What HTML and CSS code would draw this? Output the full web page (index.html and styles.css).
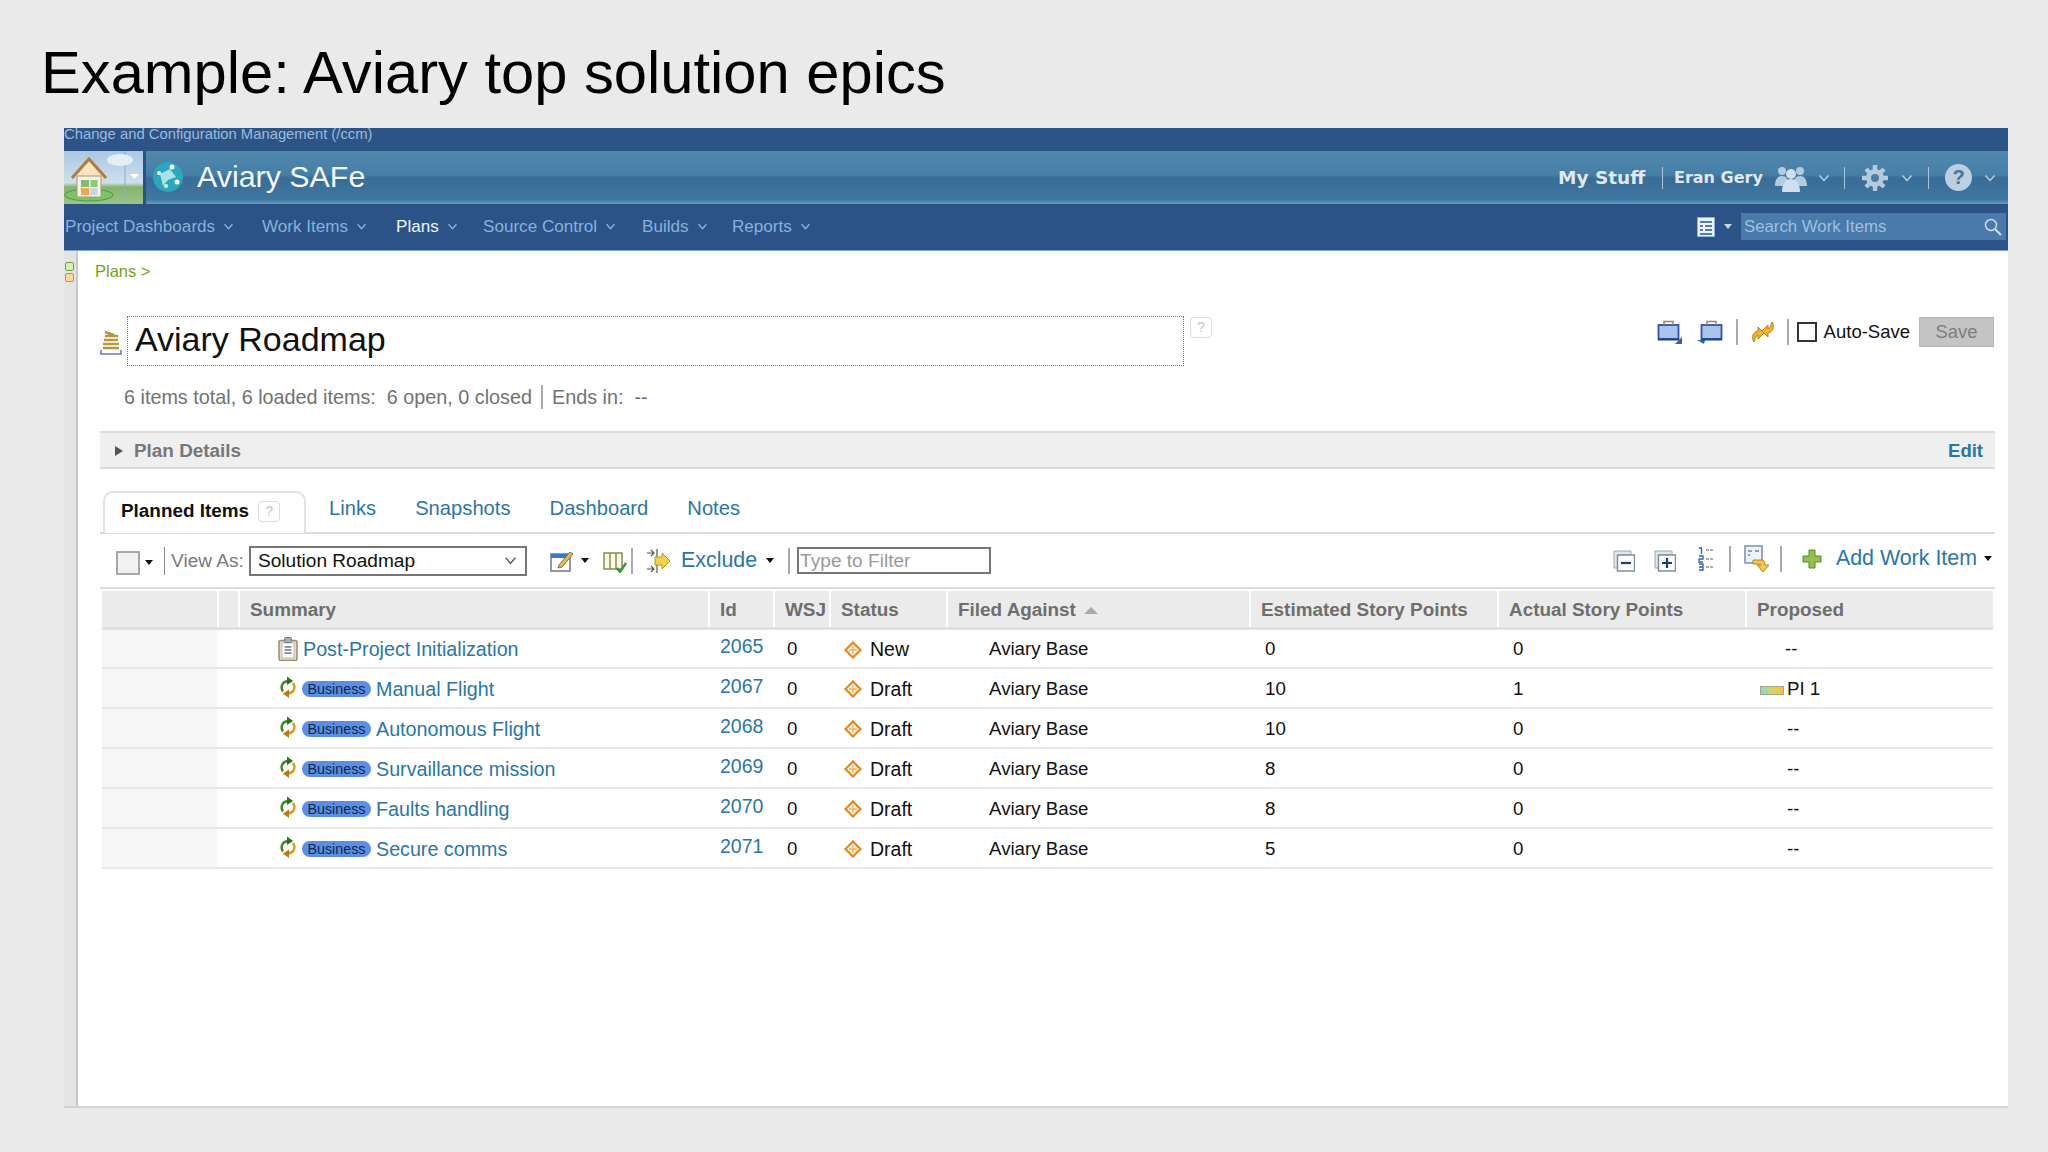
FILE: index.html
```html
<!DOCTYPE html>
<html lang="en">
<head>
<meta charset="utf-8">
<title>Example: Aviary top solution epics</title>
<link rel="stylesheet" href="styles.css">
</head>
<body>
<svg class="defs" width="0" height="0" aria-hidden="true">
  <defs>
    <symbol id="i-chev" viewBox="0 0 12 8"><path d="M1.5 1.5 6 6.5l4.500-5" fill="none" stroke="currentColor" stroke-width="1.500"/></symbol>
    <symbol id="i-caret" viewBox="0 0 8 5"><path d="M0 0h8L4 5z" fill="currentColor"/></symbol>
    <symbol id="i-clip" viewBox="0 0 20 24"><rect x="1" y="3.500" width="18" height="20" rx="2" fill="#e8dcc4" stroke="#a08a68" stroke-width="1.500"/><rect x="4" y="6" width="12" height="15" fill="#fff" stroke="#b8b8c0"/><rect x="6.500" y="0.500" width="7" height="5" rx="1" fill="#a6a8b4" stroke="#7c7e8a"/><path d="M6.500 10h7M6.500 13h7M6.500 16h7" stroke="#6a7a9a" stroke-width="1.300"/></symbol>
    <symbol id="i-cycle" viewBox="0 0 18 22"><path d="M4 15.500C1 11 3 5.500 9 5" fill="none" stroke="#3d8a22" stroke-width="2.400"/><path d="M8 0.500 14 5l-6 4z" fill="#2f6f16"/><path d="M14 7c3 4.500 1 10-5 10.500" fill="none" stroke="#d99a1c" stroke-width="2.400"/><path d="M10 22 4 17.500l6-4z" fill="#b87a10"/></symbol>
    <symbol id="i-state" viewBox="0 0 18 18"><path d="M9 1.500 16.500 9 9 16.500 1.500 9z" fill="#fff6e4" stroke="#e8861c" stroke-width="2.200"/><path d="M9 5v8M5 9h8" stroke="#f4b060" stroke-width="1.500"/></symbol>
    <symbol id="i-case-a" viewBox="0 0 26 24"><rect x="1.500" y="5" width="20" height="14" fill="#a9c4ee" stroke="#2e55a0" stroke-width="1.800"/><path d="M7 5V1.500h9V5" fill="none" stroke="#a08070" stroke-width="1.500"/><path d="M1 19.500h21" stroke="#1d3f88" stroke-width="2"/><path d="M25 17v7h-7z" fill="#2c62a8"/></symbol>
    <symbol id="i-case-b" viewBox="0 0 26 24"><rect x="4.500" y="5" width="20" height="14" fill="#a9c4ee" stroke="#2e55a0" stroke-width="1.800"/><path d="M10 5V1.500h9V5" fill="none" stroke="#a08070" stroke-width="1.500"/><path d="M4 19.500h21" stroke="#1d3f88" stroke-width="2"/><path d="M0 20h8l-1 4z" fill="#2c62a8"/></symbol>
  </defs>
</svg>
<main class="slide">
  <h1 class="slide-title">Example: Aviary top solution epics</h1>
  <section class="shot">
    <div class="app-strip">Change and Configuration Management (/ccm)</div>
    <header class="banner">
      <div class="home-tile">
        <svg class="home-svg" viewBox="0 0 79 53" aria-hidden="true">
          <path d="M61 0v53" stroke="#8fb0c8" stroke-width="1"/>
          <ellipse cx="56" cy="9" rx="13" ry="6" fill="#e4eef5"/>
          <ellipse cx="25" cy="44" rx="24" ry="6" fill="#7cc46a" stroke="#4d9a3e"/>
          <path d="M8 27 25 8l17 19" fill="#f8e4c0" stroke="#b07a3c" stroke-width="3"/>
          <rect x="13" y="25" width="24" height="21" fill="#f6f2e6" stroke="#a89878"/>
          <rect x="17" y="29" width="8" height="7" fill="#7cc070"/><rect x="26.500" y="29" width="7" height="7" fill="#8acb78"/>
          <rect x="17" y="37" width="8" height="7" fill="#f0a850"/><rect x="26.500" y="37" width="7" height="7" fill="#c8d4e0"/>
          <path d="M66 23h9l-4.500 5z" fill="#fff"/>
        </svg>
      </div>
      <div class="banner-bar">
        <svg class="globe" viewBox="0 0 32 32" aria-hidden="true">
          <circle cx="16" cy="16" r="15" fill="#2aa7bd"/>
          <path d="M8 13 18 8l6 8-8 3-5 6z" fill="#a6e2e4"/>
          <circle cx="20" cy="6" r="2.500" fill="#fff"/><circle cx="25" cy="21" r="2.500" fill="#fff"/><circle cx="14" cy="25" r="2" fill="#e6fbfb"/><circle cx="7" cy="12" r="2" fill="#e6fbfb"/>
        </svg>
        <span class="project-name">Aviary SAFe</span>
        <div class="banner-right">
          <span class="my-stuff">My Stuff</span>
          <span class="bsep bsep-a"></span>
          <span class="user-name">Eran Gery</span>
          <svg class="people" viewBox="0 0 32 28" aria-hidden="true">
            <g fill="#b4cbdd"><circle cx="7" cy="7" r="4"/><circle cx="25" cy="7" r="4"/><path d="M0 22c0-7 3-10 7-10s7 3 7 10zM18 22c0-7 3-10 7-10s7 3 7 10z"/></g>
            <circle cx="16" cy="10" r="5" fill="#cfdfec"/><path d="M7 28c0-9 4-13 9-13s9 4 9 13z" fill="#cfdfec"/>
          </svg>
          <svg class="bchev bchev-a"><use href="#i-chev"/></svg>
          <span class="bsep bsep-b"></span>
          <svg class="gear" viewBox="0 0 28 28" aria-hidden="true">
            <path d="M14 8a6 6 0 1 0 0 12 6 6 0 0 0 0-12z" fill="none" stroke="#b4cbdd" stroke-width="6"/>
            <path d="M14 1v26M1 14h26M5 5l18 18M23 5 5 23" stroke="#b4cbdd" stroke-width="4.500"/>
            <circle cx="14" cy="14" r="4" fill="#4a7fa6"/>
          </svg>
          <svg class="bchev bchev-b"><use href="#i-chev"/></svg>
          <span class="bsep bsep-c"></span>
          <span class="help-dot">?</span>
          <svg class="bchev bchev-c"><use href="#i-chev"/></svg>
        </div>
      </div>
    </header>
    <nav class="menu">
      <a class="menu-item w-dash">Project Dashboards<svg class="mchev"><use href="#i-chev"/></svg></a>
      <a class="menu-item w-work">Work Items<svg class="mchev"><use href="#i-chev"/></svg></a>
      <a class="menu-item menu-active w-plans">Plans<svg class="mchev"><use href="#i-chev"/></svg></a>
      <a class="menu-item w-src">Source Control<svg class="mchev"><use href="#i-chev"/></svg></a>
      <a class="menu-item w-build">Builds<svg class="mchev"><use href="#i-chev"/></svg></a>
      <a class="menu-item w-rep">Reports<svg class="mchev"><use href="#i-chev"/></svg></a>
      <div class="menu-right">
        <svg class="doc-ico" viewBox="0 0 18 20" aria-hidden="true"><rect width="18" height="20" fill="#eaf4ff" stroke="#6aa0e0" stroke-width="1.500"/><path d="M3 5h12M3 9h3M8 9h7M3 13h3M8 13h7M3 17h12" stroke="#2c5388" stroke-width="1.600"/></svg>
        <svg class="doc-caret"><use href="#i-caret"/></svg>
        <div class="search">
          <span>Search Work Items</span>
          <svg class="search-ico" viewBox="0 0 18 18" aria-hidden="true"><circle cx="7" cy="7" r="5.500" fill="none" stroke="#c8dcee" stroke-width="1.500"/><path d="m11 11 6 6" stroke="#c8dcee" stroke-width="2.200"/></svg>
        </div>
      </div>
    </nav>
    <div class="body">
      <aside class="side">
        <span class="side-dot side-green"></span>
        <span class="side-dot side-orange"></span>
      </aside>
      <div class="content">
        <div class="crumb">Plans &gt;</div>
        <div class="title-row">
          <svg class="plan-ico" viewBox="0 0 22 26" aria-hidden="true">
            <path d="M5 2 14 5M5 6h13M4 10h14M3 14h16M3 18h16" stroke="#b8963c" stroke-width="2.400" fill="none"/>
            <path d="M1 20v4h20v-4" stroke="#6678b8" stroke-width="1.500" fill="none"/>
          </svg>
          <div class="title-box">Aviary Roadmap</div>
          <span class="bubble bubble-title">?</span>
          <div class="title-actions">
            <svg class="act-ico"><use href="#i-case-a"/></svg>
            <svg class="act-ico act-2"><use href="#i-case-b"/></svg>
            <span class="vsep act-sep1"></span>
            <svg class="sync" viewBox="0 0 24 24" aria-hidden="true"><path d="M3 22c-3-5-1-10 4-11V7l6 6-6 6v-4c-2 1-3 3-4 7zM21 2c3 5 1 10-4 11v4l-6-6 6-6v4c2-1 3-3 4-7z" fill="#f0b428" stroke="#b8801a"/></svg>
            <span class="vsep act-sep2"></span>
            <span class="check"></span>
            <span class="autosave">Auto-Save</span>
            <span class="save-btn">Save</span>
          </div>
        </div>
        <div class="stats"><span>6 items total, 6 loaded items:&nbsp; 6 open, 0 closed</span><span class="stats-sep"></span><span>Ends in: &nbsp;--</span></div>
        <div class="details">
          <span class="tri"></span>
          <span class="details-label">Plan Details</span>
          <a class="details-edit">Edit</a>
        </div>
        <div class="tabs">
          <div class="tab-active">Planned Items<span class="bubble bubble-tab">?</span></div>
          <a class="tab tab-links">Links</a>
          <a class="tab">Snapshots</a>
          <a class="tab">Dashboard</a>
          <a class="tab">Notes</a>
        </div>
        <div class="toolbar">
          <span class="pick"></span>
          <svg class="caret caret-pick"><use href="#i-caret"/></svg>
          <span class="vsep sep-view"></span>
          <span class="view-as">View As:</span>
          <div class="select"><span>Solution Roadmap</span><svg class="sel-chev"><use href="#i-chev"/></svg></div>
          <svg class="tool-edit" viewBox="0 0 24 22" aria-hidden="true"><rect x="1" y="4" width="19" height="17" fill="#fff" stroke="#6a7a8a" stroke-width="1.500"/><path d="M1 4h19v4H1z" fill="#3a78c4"/><path d="m9 15 11-13 3 2-11 13-4 1z" fill="#e8b860" stroke="#8a6a30"/></svg>
          <svg class="caret caret-edit"><use href="#i-caret"/></svg>
          <svg class="tool-cols" viewBox="0 0 24 24" aria-hidden="true"><path d="M1 4h18v16H1zM7 4v16M13 4v16" fill="#fdf8e6" stroke="#8a8a50" stroke-width="1.500"/><path d="m14 19 3 4 6-9" fill="none" stroke="#2f9a3a" stroke-width="2.400"/></svg>
          <span class="vsep sep-cols"></span>
          <svg class="tool-excl" viewBox="0 0 24 26" aria-hidden="true"><path d="M1 5h7M5 2l3 3-3 3M1 21h7M5 18l3 3-3 3M11 1v24" stroke="#555" stroke-width="1.200" fill="none"/><path d="M9 9h7V5l8 8-8 8v-4H9z" fill="#f2d24a" stroke="#b8961e"/></svg>
          <a class="tool-link">Exclude</a>
          <svg class="caret caret-excl"><use href="#i-caret"/></svg>
          <span class="vsep sep-excl"></span>
          <div class="filter">Type to Filter</div>
          <div class="tool-right">
            <svg class="tool-sq" viewBox="0 0 22 22" aria-hidden="true"><path d="M1 1h17v4H5v13H1z" fill="#dfe6ee" stroke="#9aa8b8"/><rect x="4.500" y="5" width="17" height="16" fill="#fff" stroke="#7c8fa3" stroke-width="1.500"/><path d="M8 13h10" stroke="#123f6e" stroke-width="2.200"/></svg>
            <svg class="tool-sq sq-2" viewBox="0 0 22 22" aria-hidden="true"><path d="M1 1h17v4H5v13H1z" fill="#dfe6ee" stroke="#9aa8b8"/><rect x="4.500" y="5" width="17" height="16" fill="#fff" stroke="#7c8fa3" stroke-width="1.500"/><path d="M8 13h10M13 8v10" stroke="#123f6e" stroke-width="2.200"/></svg>
            <svg class="tool-num" viewBox="0 0 16 24" aria-hidden="true"><path d="M1 1h2.500v6M1 9h4v3H1v3h4M1 17h4v6H1M1 20h4" fill="none" stroke="#2c62a8" stroke-width="1.300"/><path d="M8 3h7M8 12h7M8 20h7" stroke="#8a96a4" stroke-width="1.600" stroke-dasharray="3 1"/></svg>
            <span class="vsep sep-num"></span>
            <svg class="tool-move" viewBox="0 0 26 28" aria-hidden="true"><rect x="1" y="1" width="17" height="17" fill="#eef3fb" stroke="#6f86a8" stroke-width="1.400"/><path d="M4 6h4M11 6h4M4 10h2" stroke="#6f86a8" stroke-width="1.300"/><path d="M9 15h8c3 0 4 2 4 5h4l-6 7-6-7h4c0-1-1-1-3-1H9z" fill="#f4c84c" stroke="#b8861e"/></svg>
            <span class="vsep sep-move"></span>
            <svg class="tool-plus" viewBox="0 0 20 20" aria-hidden="true"><path d="M7 1h6v6h6v6h-6v6H7v-6H1V7h6z" fill="#92c04a" stroke="#4f8a2a"/></svg>
            <a class="tool-link add-link">Add Work Item</a>
            <svg class="caret caret-add"><use href="#i-caret"/></svg>
          </div>
        </div>
        <table class="grid">
          <colgroup>
            <col class="c-a"><col class="c-b"><col class="c-sum"><col class="c-id"><col class="c-wsj"><col class="c-st"><col class="c-fil"><col class="c-est"><col class="c-act"><col class="c-pro">
          </colgroup>
          <thead>
            <tr>
              <th></th><th></th><th class="th-sum">Summary</th><th>Id</th><th>WSJ</th><th>Status</th>
              <th>Filed Against <span class="sort"></span></th><th>Estimated Story Points</th><th>Actual Story Points</th><th>Proposed</th>
            </tr>
          </thead>
          <tbody>
            <tr>
              <td class="stub"></td><td></td>
              <td class="sum"><svg class="clip"><use href="#i-clip"/></svg><a class="link link-first">Post-Project Initialization</a></td>
              <td class="id">2065</td><td class="wsj">0</td>
              <td class="st"><svg class="state"><use href="#i-state"/></svg>New</td>
              <td class="fil">Aviary Base</td><td class="num">0</td><td class="num">0</td><td class="pro"><span class="dash dash-first">--</span></td>
            </tr>
            <tr>
              <td class="stub"></td><td></td>
              <td class="sum"><svg class="cycle"><use href="#i-cycle"/></svg><span class="badge">Business</span><a class="link">Manual Flight</a></td>
              <td class="id">2067</td><td class="wsj">0</td>
              <td class="st"><svg class="state"><use href="#i-state"/></svg>Draft</td>
              <td class="fil">Aviary Base</td><td class="num">10</td><td class="num">1</td>
              <td class="pro"><span class="gauge"><span class="g1"></span><span class="g2"></span><span class="g3"></span></span>PI 1</td>
            </tr>
            <tr>
              <td class="stub"></td><td></td>
              <td class="sum"><svg class="cycle"><use href="#i-cycle"/></svg><span class="badge">Business</span><a class="link">Autonomous Flight</a></td>
              <td class="id">2068</td><td class="wsj">0</td>
              <td class="st"><svg class="state"><use href="#i-state"/></svg>Draft</td>
              <td class="fil">Aviary Base</td><td class="num">10</td><td class="num">0</td><td class="pro"><span class="dash">--</span></td>
            </tr>
            <tr>
              <td class="stub"></td><td></td>
              <td class="sum"><svg class="cycle"><use href="#i-cycle"/></svg><span class="badge">Business</span><a class="link">Survaillance mission</a></td>
              <td class="id">2069</td><td class="wsj">0</td>
              <td class="st"><svg class="state"><use href="#i-state"/></svg>Draft</td>
              <td class="fil">Aviary Base</td><td class="num">8</td><td class="num">0</td><td class="pro"><span class="dash">--</span></td>
            </tr>
            <tr>
              <td class="stub"></td><td></td>
              <td class="sum"><svg class="cycle"><use href="#i-cycle"/></svg><span class="badge">Business</span><a class="link">Faults handling</a></td>
              <td class="id">2070</td><td class="wsj">0</td>
              <td class="st"><svg class="state"><use href="#i-state"/></svg>Draft</td>
              <td class="fil">Aviary Base</td><td class="num">8</td><td class="num">0</td><td class="pro"><span class="dash">--</span></td>
            </tr>
            <tr>
              <td class="stub"></td><td></td>
              <td class="sum"><svg class="cycle"><use href="#i-cycle"/></svg><span class="badge">Business</span><a class="link">Secure comms</a></td>
              <td class="id">2071</td><td class="wsj">0</td>
              <td class="st"><svg class="state"><use href="#i-state"/></svg>Draft</td>
              <td class="fil">Aviary Base</td><td class="num">5</td><td class="num">0</td><td class="pro"><span class="dash">--</span></td>
            </tr>
          </tbody>
        </table>
      </div>
    </div>
  </section>
</main>
</body>
</html>
```
FILE: styles.css
```css
* { box-sizing: border-box; }
html, body { margin: 0; padding: 0; }
body { font-family: "Liberation Sans", Arial, sans-serif; color: #111; }
.defs { display: block; height: 0; width: 0; }
a { color: inherit; text-decoration: none; }
svg { display: block; flex: none; }

.slide { width: 2048px; height: 1152px; background: #eaeaea; overflow: hidden; }
.slide-title { margin: 0; height: 128px; padding: 35px 0 0 41px; font-size: 59.700px; line-height: 76px; font-weight: 400; color: #000; }

.shot { margin-left: 64px; width: 1944px; height: 980px; background: #fff; display: flex; flex-direction: column; border-bottom: 2px solid #d2d2d2; }
.app-strip { height: 22px; background: #2d5487; color: #9cbad8; font-size: 14.800px; line-height: 13px; white-space: nowrap; }

.banner { height: 55px; background: #2a5084; display: flex; gap: 3px; padding: 1px 0 1px; }
.home-tile { width: 79px; background: linear-gradient(#a9c8e2 0%, #cfe0ec 60%, #84b36c 68%, #9cc488 100%); }
.home-svg { width: 79px; height: 53px; }
.banner-bar { flex: 1; display: flex; align-items: center; padding-left: 6px; background: linear-gradient(#5089ae 0%, #467ea6 45%, #386c96 52%, #3f78a2 92%, #6d9fc2 100%); color: #fff; }
.globe { width: 32px; height: 32px; margin-bottom: 2px; }
.project-name { margin: 0 0 2px 13px; font-size: 30.400px; color: #f4f8fb; }
.banner-right { margin-left: auto; display: flex; align-items: center; }
.my-stuff { font-family: "DejaVu Sans", sans-serif; font-weight: 700; font-size: 18.500px; width: 86px; color: #dfe9f2; white-space: nowrap; }
.user-name { font-family: "DejaVu Sans", sans-serif; font-weight: 700; font-size: 16px; width: 88px; color: #dfe9f2; white-space: nowrap; }
.bsep { width: 1px; height: 22px; background: #a8c4da; }
.bsep-a { margin: 0 11px 0 18px; }
.bsep-b { margin: 0 16px 0 14px; }
.bsep-c { margin: 0 16px 0 15px; }
.people { width: 32px; height: 28px; margin-left: 13px; }
.gear { width: 28px; height: 28px; }
.bchev { width: 12px; height: 8px; color: #b8d0e2; }
.bchev-a { margin-left: 11px; }
.bchev-b { margin-left: 12px; }
.bchev-c { margin: 0 12px 0 12px; }
.help-dot { width: 27px; height: 27px; border-radius: 50%; background: #bcd0e2; color: #4a7298; font-weight: 700; font-size: 20px; line-height: 27px; text-align: center; }

.menu { height: 46px; background: #2c5388; border-bottom: 1px solid #7fa6d6; display: flex; align-items: center; padding: 0 0 2px 1px; color: #86b2dc; font-size: 17.100px; white-space: nowrap; }
.menu-item { display: flex; align-items: center; gap: 8px; }
.menu-active { color: #eef4fa; }
.w-dash { width: 197px; }
.w-work { width: 134px; }
.w-plans { width: 87px; }
.w-src { width: 159px; }
.w-build { width: 90px; }
.w-rep { width: 90px; }
.mchev { width: 11px; height: 7px; color: #8fb2d4; }
.menu-right { margin-left: auto; display: flex; align-items: center; padding-right: 2px; }
.doc-ico { width: 18px; height: 20px; }
.doc-caret { width: 8px; height: 5px; margin: 0 9px 0 9px; color: #c5d8ea; }
.search { width: 265px; height: 27px; background: #4a79ab; display: flex; align-items: center; justify-content: space-between; padding: 0 4px 0 3px; color: #9ec0de; font-size: 16.800px; }
.search-ico { width: 18px; height: 18px; }

.body { flex: 1; display: flex; min-height: 0; }
.side { width: 14px; background: #e4e4e4; border-right: 2px solid #c8c8c8; padding: 11px 0 0 1px; display: flex; flex-direction: column; gap: 2px; }
.side-dot { width: 9px; height: 9px; border-radius: 2px; border: 1.500px solid; }
.side-green { border-color: #6aa83c; background: #d8ecc4; }
.side-orange { border-color: #e08a2a; background: #fbd8a6; }

.content { flex: 1; min-width: 0; padding-left: 17px; }
.crumb { height: 49px; padding-top: 11px; font-size: 16.500px; line-height: 18px; color: #6fa515; }

.title-row { height: 49px; margin-left: 5px; margin-top: 16px; padding-right: 14px; display: flex; align-items: flex-start; }
.plan-ico { width: 22px; height: 26px; margin-top: 14px; }
.title-box { width: 1057px; height: 50px; margin-left: 5px; padding-left: 7px; border: 1px dotted #777; font-size: 34px; line-height: 44px; color: #111; white-space: nowrap; }
.bubble { display: block; border: 1.500px solid #dcdcdc; border-radius: 4px; color: #c6c6c6; text-align: center; background: #fff; }
.bubble-title { width: 22px; height: 21px; margin: 1px 0 0 6px; font-size: 14px; line-height: 18px; }
.title-actions { margin-left: auto; display: flex; align-items: center; height: 32px; }
.act-ico { width: 26px; height: 24px; }
.act-2 { margin-left: 14px; }
.vsep { display: block; flex: none; width: 2px; height: 26px; background: #aaa; }
.act-sep1 { margin: 0 13px; }
.act-sep2 { margin: 0 8px 0 12px; }
.sync { width: 24px; height: 24px; }
.check { width: 20px; height: 20px; border: 2px solid #333; background: #fff; }
.autosave { margin-left: 7px; font-size: 18.500px; color: #111; }
.save-btn { width: 75px; height: 30px; margin-left: 9px; background: #c4c4c4; border: 1px solid #b8b8b8; color: #7e7e7e; font-size: 18.500px; line-height: 28px; text-align: center; }

.stats { margin: 14px 0 0 29px; height: 36px; display: flex; align-items: center; color: #727272; font-size: 19.800px; white-space: nowrap; }
.stats-sep { width: 2px; height: 24px; background: #aaa; margin: 0 9px 0 9px; }

.details { height: 38px; margin: 16px 0 0 5px; width: 1895px; background: #efefef; border-top: 2px solid #dcdcdc; border-bottom: 2px solid #dcdcdc; display: flex; align-items: center; padding: 2px 12px 0 15px; }
.tri { width: 0; height: 0; border-left: 8px solid #555; border-top: 5px solid transparent; border-bottom: 5px solid transparent; }
.details-label { margin-left: 11px; font-weight: 700; font-size: 18.900px; color: #777; }
.details-edit { margin-left: auto; font-weight: 700; font-size: 18.500px; color: #2a76a8; }

.tabs { height: 65px; margin-left: 5px; width: 1895px; padding: 22px 0 0 3px; border-bottom: 2px solid #dcdcdc; display: flex; align-items: flex-start; gap: 39px; font-size: 20.200px; color: #2a76a8; }
.tab-active { width: 203px; height: 42px; margin-right: -16px; padding: 7px 0 0 16px; border: 2px solid #e2e2e2; border-bottom: 0; border-radius: 10px 10px 0 0; background: #fff; color: #111; font-weight: 700; font-size: 18.900px; display: flex; align-items: flex-start; }
.bubble-tab { width: 22px; height: 21px; margin: 1px 0 0 9px; font-size: 14px; line-height: 18px; font-weight: 400; }
.tab { padding-top: 6px; }

.toolbar { height: 55px; margin-left: 5px; width: 1895px; border-bottom: 2px solid #dcdcdc; display: flex; align-items: center; font-size: 19.100px; }
.pick { width: 24px; height: 24px; margin: 4px 0 0 16px; border: 2px solid #a8a8a8; background: #f1f1f1; }
.caret { width: 8px; height: 5px; color: #111; }
.caret-pick { margin: 4px 0 0 5px; }
.sep-view { margin: 0 6px 0 11px; width: 1px; height: 28px; background: #888; }
.view-as { color: #7b7b7b; width: 78px; white-space: nowrap; }
.select { width: 278px; height: 30px; border: 2px solid #777; display: flex; align-items: center; justify-content: space-between; padding: 0 8px 0 7px; color: #111; white-space: nowrap; }
.sel-chev { width: 13px; height: 9px; color: #666; }
.tool-edit { width: 24px; height: 22px; margin-left: 23px; }
.caret-edit { margin-left: 7px; }
.tool-cols { width: 24px; height: 24px; margin-left: 14px; }
.sep-cols { width: 2px; height: 26px; margin-left: 4px; }
.tool-excl { width: 24px; height: 26px; margin-left: 13px; }
.tool-link { color: #2a76a8; font-size: 21.400px; white-space: nowrap; }
.tool-excl + .tool-link { margin-left: 11px; }
.caret-excl { margin-left: 9px; }
.sep-excl { margin: 0 7px 0 14px; }
.filter { width: 194px; height: 27px; border: 2px solid #777; padding-left: 1px; line-height: 23px; color: #9a9a9a; white-space: nowrap; }
.tool-right { margin-left: auto; display: flex; align-items: center; padding-bottom: 4px; }
.tool-sq { width: 22px; height: 22px; margin-top: 4px; }
.sq-2 { margin-left: 19px; }
.tool-num { width: 16px; height: 24px; margin-left: 22px; }
.sep-num { margin: 0 13px 0 15px; }
.tool-move { width: 26px; height: 28px; }
.sep-move { margin: 0 20px 0 10px; }
.tool-plus { width: 20px; height: 20px; }
.add-link { margin-left: 14px; }
.caret-add { margin: 0 3px 0 7px; }

.grid { margin: 2px 0 0 7px; width: 1891px; table-layout: fixed; border-collapse: collapse; font-size: 18.700px; }
.c-a { width: 116px; } .c-b { width: 21px; } .c-sum { width: 470px; } .c-id { width: 65px; } .c-wsj { width: 56px; }
.c-st { width: 117px; } .c-fil { width: 303px; } .c-est { width: 248px; } .c-act { width: 248px; } .c-pro { width: 247px; }
.grid th { height: 37px; padding: 2px 0 0 10px; background: #ebebeb; border-right: 2px solid #fff; border-bottom: 3px solid #e0e0e0; text-align: left; font-size: 18.900px; font-weight: 700; color: #6e6e6e; white-space: nowrap; }
.grid th:last-child { border-right: 0; }
.grid .th-sum { padding-left: 10px; }
.grid td { height: 40px; padding: 2px 0 0; border-right: 2px solid #fff; border-bottom: 2px solid #e8e8e8; white-space: nowrap; vertical-align: middle; }
.grid td:last-child { border-right: 0; }
.grid .stub { background: #f6f6f6; }
.sum > * { display: inline-block; vertical-align: middle; }
.clip { width: 20px; height: 24px; margin: -2px 5px 0 38px; }
.cycle { width: 18px; height: 22px; margin: -4px 5px 0 39px; }
.badge { width: 69px; height: 16px; border-radius: 8px; background: #5b8fe6; color: #10264d; font-size: 14.300px; line-height: 16px; text-align: center; }
.link { color: #2a76a8; font-size: 19.700px; }
.badge + .link { margin-left: 5px; }
.grid .id { padding: 0 0 3px 10px; color: #2a76a8; font-size: 19.500px; }
.grid .wsj { padding-left: 12px; }
.grid .st { padding-left: 13px; font-size: 19.500px; }
.state { display: inline-block; vertical-align: middle; width: 18px; height: 18px; margin: 0 8px 2px 0; }
.grid .fil { padding-left: 41px; }
.grid .num { padding-left: 14px; }
.grid .pro { padding-left: 13px; }
.dash { display: inline-block; padding-left: 27px; }
.dash-first { padding-left: 25px; }
.gauge { display: inline-flex; vertical-align: middle; width: 24px; height: 9px; margin-right: 3px; border: 1px solid #9aa890; }
.g1 { flex: 1; background: #9fd8b8; } .g2 { flex: 1; background: #c8d86a; } .g3 { flex: 1; background: #f0c83c; }
.sort { display: inline-block; width: 0; height: 0; margin-left: 3px; border-left: 7px solid transparent; border-right: 7px solid transparent; border-bottom: 7px solid #aaa; vertical-align: 2px; }
```
